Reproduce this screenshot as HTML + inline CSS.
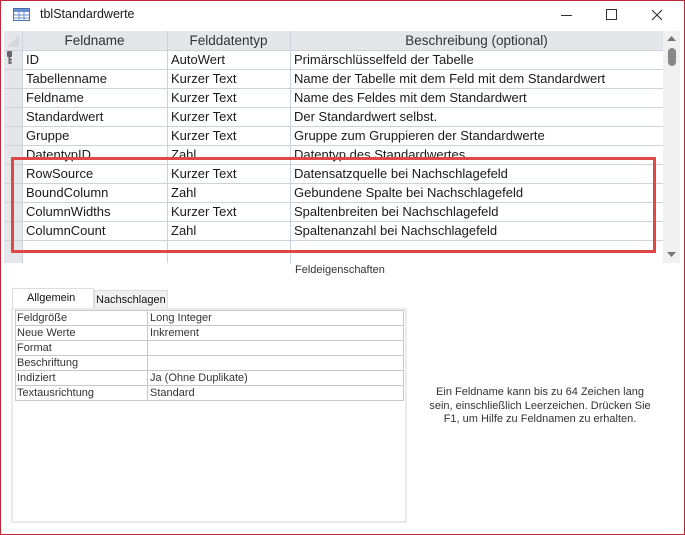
<!DOCTYPE html>
<html><head><meta charset="utf-8"><style>
*{margin:0;padding:0;box-sizing:border-box}
body{width:685px;height:535px;background:#fff;position:relative;overflow:hidden;font-family:"Segoe UI","Liberation Sans",sans-serif;color:#1a1a1a}
.a{position:absolute}
.win{left:0;top:0;width:685px;height:535px;border:1px solid #c0283a}
.t{font-size:13px;white-space:nowrap}
.hdr{background:#e4e6ea;color:#333;text-align:center;font-size:13.5px}
.vl{background:#cdd3dc;width:1px}
.hl{background:#cdd3dc;height:1px}
.p{font-size:11px;white-space:nowrap;color:#333}
</style></head><body>
<div class="a win"></div>
<svg class="a" style="left:13px;top:8px" width="17" height="13" viewBox="0 0 17 13"><rect x="0.5" y="0.5" width="16" height="12" fill="#fff" stroke="#4a6fb0"/><rect x="1" y="1" width="15" height="3" fill="#6a8fd0"/><path d="M1 7h15M1 10h15M6 1v12M11 1v12" stroke="#6a8fd0"/></svg>
<div class="a t" style="left:40px;top:7px;font-size:12.5px">tblStandardwerte</div>
<div class="a" style="left:561px;top:15px;width:11px;height:1px;background:#333"></div>
<div class="a" style="left:606px;top:9px;width:11px;height:11px;border:1px solid #333"></div>
<svg class="a" style="left:651px;top:9px" width="12" height="12"><path d="M1 1L11 11M11 1L1 11" stroke="#333" stroke-width="1.1"/></svg>
<div class="a" style="left:4px;top:31px;width:18px;height:232px;background:#e4e6ea"></div>
<div class="a hdr" style="left:22px;top:31px;width:145px;height:19px;line-height:19px">Feldname</div>
<div class="a hdr" style="left:167px;top:31px;width:123px;height:19px;line-height:19px">Felddatentyp</div>
<div class="a hdr" style="left:290px;top:31px;width:373px;height:19px;line-height:19px">Beschreibung (optional)</div>
<svg class="a" style="left:6px;top:34px" width="14" height="14"><path d="M13 1L1 13H13Z" fill="#d4d7dc"/></svg>
<svg class="a" style="left:6px;top:51px" width="8" height="14"><rect x="1" y="0" width="5" height="6" rx="1" fill="#666"/><rect x="2.5" y="5" width="2" height="8" fill="#666"/><rect x="4" y="8" width="2" height="1.5" fill="#666"/><rect x="4" y="11" width="2" height="1.5" fill="#666"/></svg>
<div class="a vl" style="left:22px;top:31px;height:232px"></div>
<div class="a vl" style="left:167px;top:31px;height:232px"></div>
<div class="a vl" style="left:290px;top:31px;height:232px"></div>
<div class="a hl" style="left:4px;top:50px;width:659px"></div>
<div class="a hl" style="left:4px;top:69px;width:659px"></div>
<div class="a hl" style="left:4px;top:88px;width:659px"></div>
<div class="a hl" style="left:4px;top:107px;width:659px"></div>
<div class="a hl" style="left:4px;top:126px;width:659px"></div>
<div class="a hl" style="left:4px;top:145px;width:659px"></div>
<div class="a hl" style="left:4px;top:164px;width:659px"></div>
<div class="a hl" style="left:4px;top:183px;width:659px"></div>
<div class="a hl" style="left:4px;top:202px;width:659px"></div>
<div class="a hl" style="left:4px;top:221px;width:659px"></div>
<div class="a hl" style="left:4px;top:240px;width:659px"></div>
<div class="a" style="left:26px;top:50px;line-height:19px;font-size:13px">
ID<br>Tabellenname<br>Feldname<br>Standardwert<br>Gruppe<br>DatentypID<br>RowSource<br>BoundColumn<br>ColumnWidths<br>ColumnCount</div>
<div class="a" style="left:171px;top:50px;line-height:19px;font-size:13px">
AutoWert<br>Kurzer Text<br>Kurzer Text<br>Kurzer Text<br>Kurzer Text<br>Zahl<br>Kurzer Text<br>Zahl<br>Kurzer Text<br>Zahl</div>
<div class="a" style="left:294px;top:50px;line-height:19px;font-size:13px;white-space:nowrap">
Primärschlüsselfeld der Tabelle<br>Name der Tabelle mit dem Feld mit dem Standardwert<br>Name des Feldes mit dem Standardwert<br>Der Standardwert selbst.<br>Gruppe zum Gruppieren der Standardwerte<br>Datentyp des Standardwertes<br>Datensatzquelle bei Nachschlagefeld<br>Gebundene Spalte bei Nachschlagefeld<br>Spaltenbreiten bei Nachschlagefeld<br>Spaltenanzahl bei Nachschlagefeld</div>
<div class="a" style="left:663px;top:31px;width:17px;height:232px;background:#f0f0f0"></div>
<svg class="a" style="left:666px;top:34px" width="11" height="8"><path d="M1 7L5.5 2L10 7Z" fill="#777"/></svg>
<div class="a" style="left:668px;top:48px;width:8px;height:18px;border-radius:4px;background:#888"></div>
<svg class="a" style="left:666px;top:251px" width="11" height="8"><path d="M1 1L5.5 6L10 1Z" fill="#777"/></svg>
<div class="a" style="left:11px;top:157px;width:645px;height:96px;border:3px solid #e04848"></div>
<div class="a p" style="left:295px;top:264px;font-size:11px">Feldeigenschaften</div>
<div class="a" style="left:12px;top:288px;width:82px;height:21px;background:#fff;border:1px solid #ddd;border-bottom:none"></div>
<div class="a p" style="left:27px;top:292px;color:#111">Allgemein</div>
<div class="a" style="left:94px;top:290px;width:74px;height:19px;background:#f0f0f0;border:1px solid #ddd;border-bottom:none"></div>
<div class="a p" style="left:96px;top:294px;color:#111">Nachschlagen</div>
<div class="a" style="left:11px;top:308px;width:396px;height:215px;border:2px solid #eaeaea;background:#fff"></div>
<div class="a" style="left:15px;top:310px;width:389px;height:91px;border:1px solid #c8c8c8"></div>
<div class="a" style="left:147px;top:310px;width:1px;height:91px;background:#c8c8c8"></div>
<div class="a" style="left:15px;top:325px;width:389px;height:1px;background:#c8c8c8"></div>
<div class="a" style="left:15px;top:340px;width:389px;height:1px;background:#c8c8c8"></div>
<div class="a" style="left:15px;top:355px;width:389px;height:1px;background:#c8c8c8"></div>
<div class="a" style="left:15px;top:370px;width:389px;height:1px;background:#c8c8c8"></div>
<div class="a" style="left:15px;top:385px;width:389px;height:1px;background:#c8c8c8"></div>
<div class="a p" style="left:17px;top:311px;line-height:15px">Feldgröße<br>Neue Werte<br>Format<br>Beschriftung<br>Indiziert<br>Textausrichtung</div>
<div class="a p" style="left:150px;top:311px;line-height:15px">Long Integer<br>Inkrement<br><br><br>Ja (Ohne Duplikate)<br>Standard</div>
<div class="a p" style="left:420px;top:386px;width:240px;text-align:center;line-height:13.5px">Ein Feldname kann bis zu 64 Zeichen lang<br>sein, einschließlich Leerzeichen. Drücken Sie<br>F1, um Hilfe zu Feldnamen zu erhalten.</div>
</body></html>
